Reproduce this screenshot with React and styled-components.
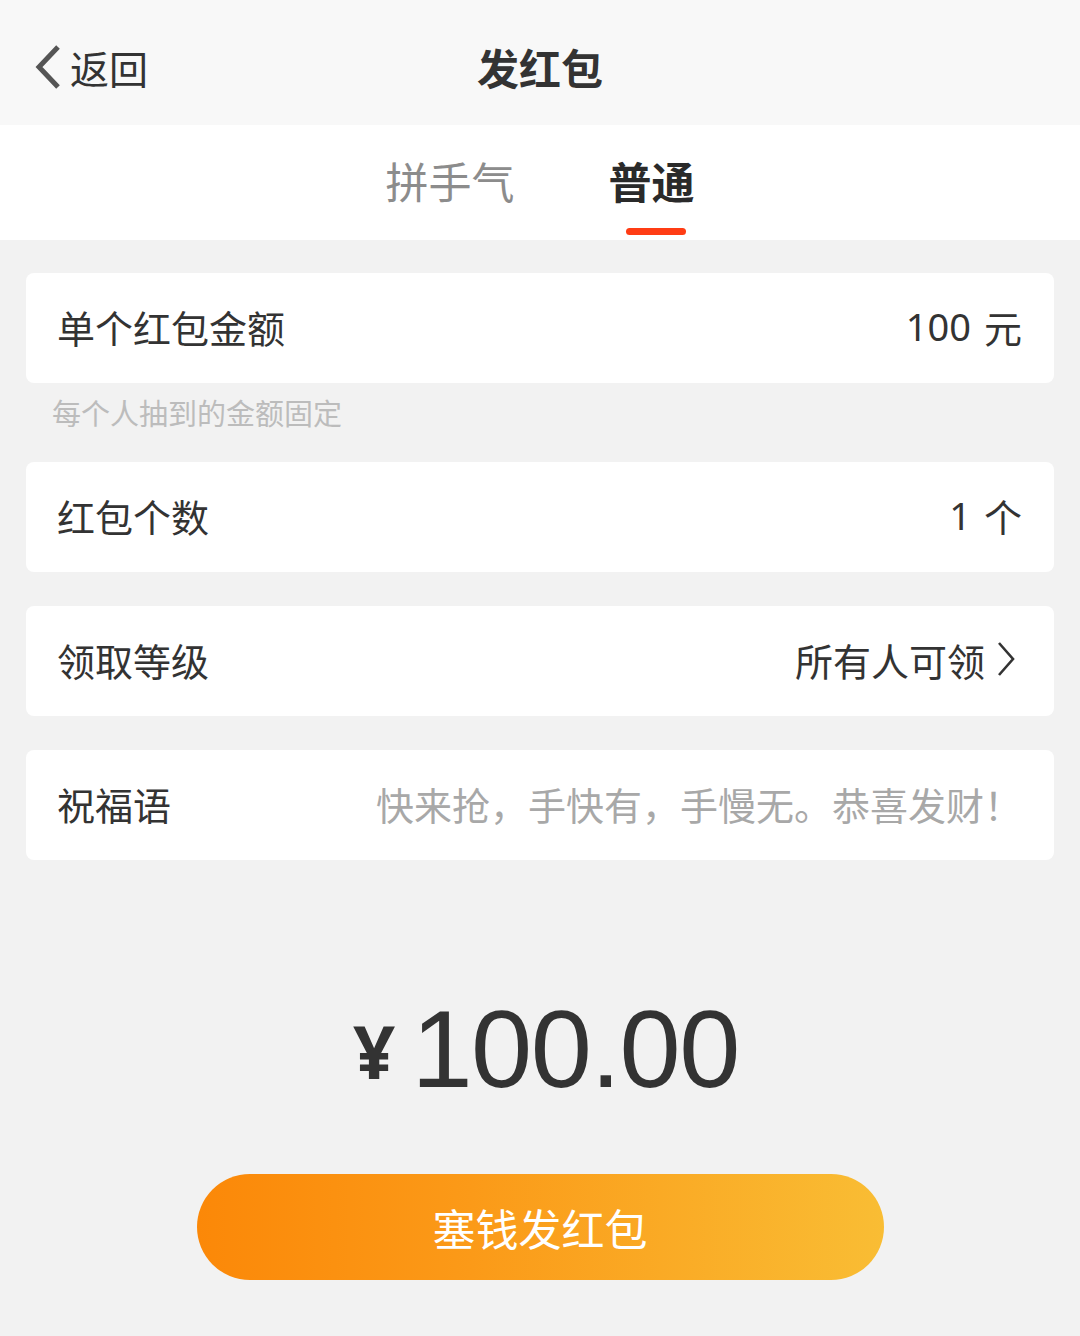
import React, { useState } from 'react';
import styled, { createGlobalStyle } from 'styled-components';

const GlobalStyle = createGlobalStyle`
    html, body {
        margin: 0;
        padding: 0;
        background: #f2f2f2;
    }
    body {
        font-family: 'Noto Sans CJK SC', 'Noto Sans', sans-serif;
        color: #333;
    }
`;

const Page = styled.div`
    width: 1080px;
    min-height: 1336px;
    background: #f2f2f2;
    display: flex;
    flex-direction: column;
`;

const NavBar = styled.div`
    height: 125px;
    background: #f8f8f8;
    display: grid;
    grid-template-columns: 1fr auto 1fr;
    align-items: center;
    padding: 8px 34px 0;
    box-sizing: border-box;
`;

const BackButton = styled.button`
    display: flex;
    align-items: center;
    gap: 8px;
    border: none;
    background: none;
    padding: 0;
    font-family: inherit;
    font-size: 39px;
    color: #333;
    cursor: pointer;
    justify-self: start;
`;

const Title = styled.h1`
    margin: 0;
    font-size: 42px;
    font-weight: 700;
    color: #333;
`;

const TabBar = styled.div`
    height: 115px;
    background: #fff;
    display: flex;
    justify-content: center;
    gap: 94px;
    box-sizing: border-box;
`;

const Tab = styled.button`
    position: relative;
    border: none;
    background: none;
    padding: 0;
    height: 115px;
    font-family: inherit;
    font-size: 43px;
    font-weight: ${p => (p.active ? 700 : 400)};
    color: ${p => (p.active ? '#2a2a2a' : '#8c8c8c')};
    cursor: pointer;
    display: flex;
    align-items: flex-start;
    padding-top: 24px;
    box-sizing: border-box;
    &::after {
        content: '';
        display: ${p => (p.active ? 'block' : 'none')};
        position: absolute;
        left: 50%;
        bottom: 5px;
        width: 60px;
        height: 7px;
        margin-left: -26px;
        border-radius: 4px;
        background: #ff3c14;
    }
`;

const Body = styled.div`
    padding: 33px 26px 0;
    display: flex;
    flex-direction: column;
`;

const Card = styled.div`
    height: 110px;
    background: #fff;
    border-radius: 8px;
    display: flex;
    align-items: center;
    justify-content: space-between;
    padding: 0 32px 4px 31px;
    box-sizing: border-box;
    margin-top: ${p => p.gap || 0}px;
`;

const Label = styled.span`
    font-size: 38px;
    color: #333;
    white-space: nowrap;
`;

const Value = styled.span`
    display: flex;
    align-items: center;
    gap: 13px;
    font-size: 38px;
    color: ${p => (p.placeholder ? '#a8a8a8' : '#333')};
    white-space: nowrap;
`;

const Num = styled.span`
    font-family: 'Noto Sans', sans-serif;
`;

const Hint = styled.div`
    font-size: 29px;
    color: #bcbcbc;
    padding: 8px 0 0 26px;
    height: 79px;
    box-sizing: border-box;
`;

const Amount = styled.div`
    margin-top: 134px;
    display: flex;
    justify-content: center;
    align-items: center;
    gap: 16px;
    color: #333;
    padding-left: 12px;
`;

const Currency = styled.span`
    font-family: 'Noto Sans', sans-serif;
    font-size: 74px;
    font-weight: 700;
    line-height: 1;
    margin-top: 4px;
`;

const Digits = styled.span`
    font-family: 'Liberation Sans', 'Noto Sans', sans-serif;
    font-size: 110px;
    letter-spacing: -1.5px;
    line-height: 1;
`;

const SendButton = styled.button`
    align-self: center;
    margin-top: 70px;
    width: 687px;
    height: 106px;
    border: none;
    border-radius: 53px;
    background: linear-gradient(90deg, #fb8808 0%, #fb9a18 40%, #f9bd34 100%);
    color: #fff;
    font-family: inherit;
    font-size: 43px;
    cursor: pointer;
`;

const BackIcon = () => (
    <svg width="28" height="46" viewBox="0 0 28 46">
        <polyline points="24,3 5,23 24,43" fill="none" stroke="#555" strokeWidth="5" />
    </svg>
);

const Chevron = () => (
    <svg width="20" height="36" viewBox="0 0 20 36" style={{ marginRight: 6, marginLeft: -2 }}>
        <polyline points="3,2 17,18 3,34" fill="none" stroke="#333" strokeWidth="2.6" />
    </svg>
);

export default function App() {
    const [tab, setTab] = useState('normal');

    return (
        <Page>
            <GlobalStyle />
            <NavBar>
                <BackButton>
                    <BackIcon />
                    返回
                </BackButton>
                <Title>发红包</Title>
                <span />
            </NavBar>
            <TabBar>
                <Tab active={tab === 'luck'} onClick={() => setTab('luck')}>拼手气</Tab>
                <Tab active={tab === 'normal'} onClick={() => setTab('normal')}>普通</Tab>
            </TabBar>
            <Body>
                <Card>
                    <Label>单个红包金额</Label>
                    <Value><Num>100</Num>元</Value>
                </Card>
                <Hint>每个人抽到的金额固定</Hint>
                <Card>
                    <Label>红包个数</Label>
                    <Value><Num>1</Num>个</Value>
                </Card>
                <Card gap={34}>
                    <Label>领取等级</Label>
                    <Value>所有人可领<Chevron /></Value>
                </Card>
                <Card gap={34}>
                    <Label>祝福语</Label>
                    <Value placeholder="1">快来抢，手快有，手慢无。恭喜发财！</Value>
                </Card>
                <Amount>
                    <Currency>¥</Currency>
                    <Digits>100.00</Digits>
                </Amount>
                <SendButton>塞钱发红包</SendButton>
            </Body>
        </Page>
    );
}
